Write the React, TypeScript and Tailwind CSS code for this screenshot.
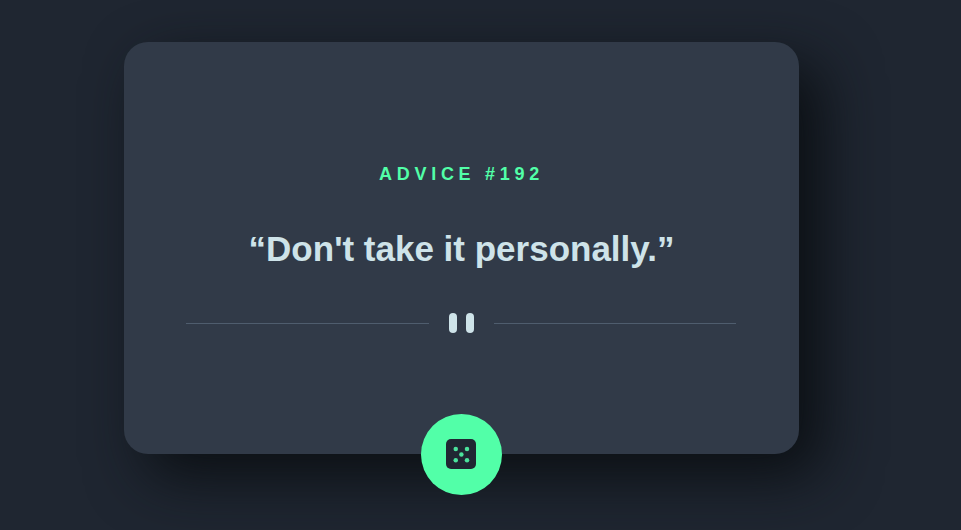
export default function App() {
  return (
    <main className="h-[530px] w-[961px] overflow-hidden bg-[#1f2631] pl-[124px] pt-[42px] font-['Liberation_Sans',Arial,sans-serif] font-bold">
      <section className="flex h-[412px] w-[675px] flex-col items-center rounded-[24px] bg-[#313a48] px-[62px] pt-[122px] shadow-[22px_22px_58px_#0b0f13]">
        <h1 className="h-5 text-[18px] leading-5 tracking-[4.7px] text-[#52ffa8]">ADVICE #192</h1>
        <p className="mt-[44px] h-[42px] whitespace-nowrap text-[35px] leading-[42px] text-[#cee3e9]">“Don't take it personally.”</p>
        <div className="mt-[43px] flex h-5 w-[551px] items-center justify-between pr-px">
          <span className="h-px w-[243px] bg-[#4f5d6e]" />
          <span className="flex gap-[9px]">
            <span className="h-5 w-2 rounded-[4px] bg-[#cee3e9]" />
            <span className="h-5 w-2 rounded-[4px] bg-[#cee3e9]" />
          </span>
          <span className="h-px w-[242px] bg-[#4f5d6e]" />
        </div>
        <button aria-label="New advice" className="mt-[81px] flex h-[81px] w-[81px] shrink-0 items-center justify-center rounded-full bg-[#52ffa8] pb-px pr-px">
          <svg className="h-[30px] w-[30px]" viewBox="0 0 24 24">
            <rect width="24" height="24" rx="4" fill="#202733" />
            <g fill="#4be39d">
              <circle cx="7.8" cy="7.9" r="1.8" />
              <circle cx="16.8" cy="7.9" r="1.8" />
              <circle cx="12.3" cy="12.4" r="1.8" />
              <circle cx="7.8" cy="16.9" r="1.8" />
              <circle cx="16.8" cy="16.9" r="1.8" />
            </g>
          </svg>
        </button>
      </section>
    </main>
  );
}
